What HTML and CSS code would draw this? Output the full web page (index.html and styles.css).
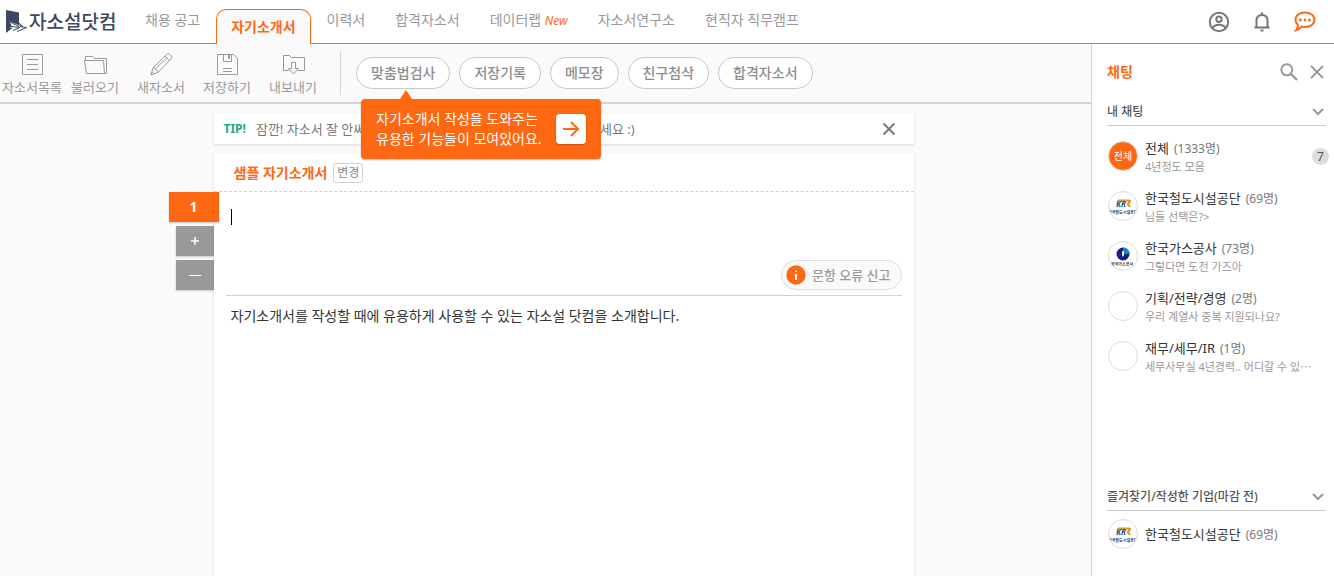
FILE: index.html
```html
<!DOCTYPE html>
<html lang="ko">
<head>
<meta charset="utf-8">
<meta name="viewport" content="width=device-width, initial-scale=1">
<title>자소설닷컴</title>
<link rel="stylesheet" href="styles.css">
</head>
<body>
<header class="header">
  <a class="logo" href="#">
    <svg class="logo-mark" width="22" height="26" viewBox="0 0 22 26" aria-hidden="true">
      <path d="M1 1L14 3.500V19L6 20L1 24Z" fill="#3d4860"/>
      <path d="M4.500 12.500L21.500 18.500L13 23L10.500 21L8 22.500L7.500 19.500L4.500 18L7 17.500Z" fill="#fff"/>
      <path d="M5 13L14 17.500M7.500 12.500L16 17M12 12.500L18 17.500M5 17.500L15 18.500M8 21.500L14 19M12 22.500L21.500 18.500L15 17.500" stroke="#3d4860" stroke-width="1" fill="none"/>
    </svg>
    <span>자소설닷컴</span>
  </a>
  <nav class="nav">
    <a class="nav-link" href="#">채용 공고</a>
    <a class="nav-link nav-link-active" href="#">자기소개서</a>
    <a class="nav-link" href="#">이력서</a>
    <a class="nav-link" href="#">합격자소서</a>
    <a class="nav-link" href="#">데이터랩 <em class="new">New</em></a>
    <a class="nav-link" href="#">자소서연구소</a>
    <a class="nav-link" href="#">현직자 직무캠프</a>
  </nav>
  <div class="header-actions">
    <button class="icon-button" aria-label="내 계정"><svg width="22" height="22" viewBox="0 0 22 22" fill="none" stroke="#777" stroke-width="2"><circle cx="11" cy="11" r="9.2"/><circle cx="11" cy="8.2" r="2.7"/><path d="M4.500 17C6 14.500 8.500 13.800 11 13.800S16 14.500 17.500 17"/></svg></button>
    <button class="icon-button" aria-label="알림"><svg width="22" height="22" viewBox="0 0 22 22" fill="none" stroke="#777" stroke-width="2"><path d="M3.500 16.500H18.500M5.500 16V9.500C5.500 6 7.500 4 11 4S16.500 6 16.500 9.500V16"/><path d="M11 1.500V4M9.500 19.500H12.500" stroke-width="2.200"/></svg></button>
    <button class="icon-button" aria-label="채팅"><svg width="22" height="22" viewBox="0 0 22 22" fill="none" stroke="#ff6813" stroke-width="2"><path d="M11 1.500C16.500 1.500 20.500 4.500 20.500 8.800S16.500 16 11 16C9.800 16 8.700 15.900 7.700 15.600C6.200 17.400 4.600 18.700 2 19.300C3.600 17.500 4.100 15.800 4 14C2.400 12.800 1.500 11 1.500 8.800C1.500 4.500 5.500 1.500 11 1.500Z"/><g fill="#ff6813" stroke="none"><circle cx="6.500" cy="9" r="1.400"/><circle cx="11" cy="9" r="1.400"/><circle cx="15.500" cy="9" r="1.400"/></g></svg></button>
  </div>
</header>
<div class="layout">
  <main class="workspace">
    <div class="toolbar">
      <div class="tools">
        <button class="tool"><svg width="24" height="24" viewBox="0 0 24 24"><path d="M2.500 2.500H22.500V22.500H2.500ZM7 7.500H18M7 12.500H18M7 17.500H18"/></svg>자소서목록</button>
        <button class="tool"><svg width="24" height="24" viewBox="0 0 24 24"><path d="M3.500 21.500L1.500 8.500H20.500L21.500 21.500ZM2.500 8V4.500H9.500L11.500 6.500H23.500V21.500H21.500"/></svg>불러오기</button>
        <button class="tool"><svg width="24" height="24" viewBox="0 0 24 24"><path d="M2 23L4 16L17.500 2.500C18.500 1.500 20 1.500 21 2.500L22 3.500C23 4.500 23 6 22 7L9 20.500ZM4 16C6 15.500 7 17 6.500 18C8 17.500 9.500 18.500 9 20.500M16 4L20.500 8.500M17.500 6L7 16.500M2 23L3 20L5 22"/></svg>새자소서</button>
        <button class="tool"><svg width="24" height="24" viewBox="0 0 24 24"><path d="M2.500 2.500H18.500L22.500 6.500V22.500H2.500ZM8.500 3V9.500H16.500V3M13.500 3V6.500H14.500V3M8 16.500H17M8 19.500H17"/></svg>저장하기</button>
        <button class="tool"><svg width="24" height="24" viewBox="0 0 24 24"><path d="M8 18.500H2.500V3.500H8.500L10.500 5.500H23.500V18.500H17M10.500 10.500H14.500V16.500H17.500L12.500 22L7.500 16.500H10.500Z"/></svg>내보내기</button>
      </div>
      <div class="helpers">
        <button class="pill">맞춤법검사</button>
        <button class="pill">저장기록</button>
        <button class="pill">메모장</button>
        <button class="pill">친구첨삭</button>
        <button class="pill">합격자소서</button>
        <div class="guide">
          <p class="guide-text">자기소개서 작성을 도와주는<br>유용한 기능들이 모여있어요.</p>
          <button class="guide-next" aria-label="다음"><svg width="18" height="18" viewBox="0 0 18 18" fill="none" stroke="#ff6813" stroke-width="2"><path d="M1 9H16M9 2L16 9L9 16"/></svg></button>
        </div>
      </div>
    </div>
    <div class="editor">
      <div class="steps">
        <button class="step step-current">1</button>
        <button class="step" aria-label="문항 추가"><svg width="14" height="14" viewBox="0 0 14 14" stroke="#fff" stroke-width="1.500"><path d="M3 7H11M7 3V11"/></svg></button>
        <button class="step" aria-label="문항 삭제"><svg width="14" height="14" viewBox="0 0 14 14" stroke="#fff"><path d="M1 7.500H13"/></svg></button>
      </div>
      <div class="papers">
        <div class="tip">
          <strong class="tip-label">TIP!</strong>
          <p class="tip-text"><span>잠깐! 자소서 잘 안써</span><span>세요 :)</span></p>
          <button class="tip-close" aria-label="닫기"><svg width="14" height="14" viewBox="0 0 14 14" stroke="#777" stroke-width="1.800"><path d="M1.500 1.500L12.500 12.500M12.500 1.500L1.500 12.500"/></svg></button>
        </div>
        <section class="paper">
          <div class="paper-head">
            <h1 class="paper-title">샘플 자기소개서</h1>
            <button class="change">변경</button>
          </div>
          <div class="question">
            <textarea class="question-input" aria-label="문항"></textarea>
            <span class="caret"></span>
            <button class="report"><svg width="20" height="20" viewBox="0 0 20 20"><circle cx="10" cy="10" r="9.700" fill="#ff6813"/><path d="M10 9V15M10 5.500V7" stroke="#fff" stroke-width="2"/></svg>문항 오류 신고</button>
          </div>
          <textarea class="answer" aria-label="답변">자기소개서를 작성할 때에 유용하게 사용할 수 있는 자소설 닷컴을 소개합니다.</textarea>
        </section>
      </div>
    </div>
  </main>
  <aside class="chat">
    <div class="chat-head">
      <h2 class="chat-title">채팅</h2>
      <button class="chat-action" aria-label="검색"><svg width="18" height="18" viewBox="0 0 18 18" fill="none" stroke="#999" stroke-width="2"><circle cx="6.800" cy="6.800" r="5.500"/><path d="M11 11L17 17" stroke-width="2.400"/></svg></button>
      <button class="chat-action" aria-label="닫기"><svg width="14" height="14" viewBox="0 0 14 14" stroke="#999" stroke-width="1.800"><path d="M1 1L13 13M13 1L1 13"/></svg></button>
    </div>
    <section class="rooms rooms-mine">
      <h3 class="rooms-head"><span>내 채팅</span><svg width="14" height="10" viewBox="0 0 14 10" fill="none" stroke="#999" stroke-width="2"><path d="M2 2L7 7L12 2"/></svg></h3>
      <ul class="room-list">
        <li class="room"><span class="avatar avatar-all">전체</span><div class="room-text"><p class="room-name">전체<small>(1333명)</small></p><p class="room-last">4년정도 모음</p></div><span class="badge">7</span></li>
        <li class="room"><span class="avatar"><svg width="28" height="28" viewBox="0 0 28 28"><path d="M9 7.500H20C22 7.500 22.500 9 21.500 10.500L20 12.500L22.500 15H20L17.500 12.500L19 9.500H7.500Z" fill="#d59b34"/><text class="mark" x="7" y="15">KR</text><text class="caption" x="-1" y="22">한국철도시설공단</text></svg></span><div class="room-text"><p class="room-name">한국철도시설공단<small>(69명)</small></p><p class="room-last">님들 선택은?&gt;</p></div></li>
        <li class="room"><span class="avatar"><svg width="28" height="28" viewBox="0 0 28 28"><circle cx="14" cy="12" r="6.500" fill="#141f80"/><path d="M14 5.500A6.500 6.500 0 0 1 20.500 12L14 12Z" fill="#078bc4"/><ellipse cx="14" cy="11.500" rx="1" ry="3" fill="#fff"/><text class="caption caption-dark" x="2" y="24">한국가스공사</text></svg></span><div class="room-text"><p class="room-name">한국가스공사<small>(73명)</small></p><p class="room-last">그렇다면 도전 가즈아</p></div></li>
        <li class="room"><span class="avatar"></span><div class="room-text"><p class="room-name">기획/전략/경영<small>(2명)</small></p><p class="room-last">우리 계열사 중복 지원되나요?</p></div></li>
        <li class="room"><span class="avatar"></span><div class="room-text"><p class="room-name">재무/세무/IR<small>(1명)</small></p><p class="room-last">세무사무실 4년경력.. 어디갈 수 있<span class="more">⋯</span></p></div></li>
      </ul>
    </section>
    <section class="rooms">
      <h3 class="rooms-head"><span>즐겨찾기/작성한 기업(마감 전)</span><svg width="14" height="10" viewBox="0 0 14 10" fill="none" stroke="#999" stroke-width="2"><path d="M2 2L7 7L12 2"/></svg></h3>
      <ul class="room-list room-list-short">
        <li class="room"><span class="avatar"><svg width="28" height="28" viewBox="0 0 28 28"><path d="M9 7.500H20C22 7.500 22.500 9 21.500 10.500L20 12.500L22.500 15H20L17.500 12.500L19 9.500H7.500Z" fill="#d59b34"/><text class="mark" x="7" y="15">KR</text><text class="caption" x="-1" y="22">한국철도시설공단</text></svg></span><div class="room-text"><p class="room-name">한국철도시설공단<small>(69명)</small></p></div></li>
      </ul>
    </section>
  </aside>
</div>
</body>
</html>
```
FILE: styles.css
```css
* { box-sizing: border-box; }
body {
  margin: 0;
  min-height: 100vh;
  display: flex;
  flex-direction: column;
  background: #fafafa;
  color: #333;
  font: 14px/20px "Noto Sans", "Noto Sans CJK KR", sans-serif;
}
button, textarea { font: inherit; color: inherit; border: 0; background: none; padding: 0; margin: 0; }
button { cursor: pointer; white-space: nowrap; }
h1, h2, h3, p, ul { margin: 0; padding: 0; }
ul { list-style: none; }
a { color: inherit; text-decoration: none; }
svg { display: block; flex: none; }

.header { display: flex; height: 44px; background: #fff; border-bottom: 1px solid #ff6813; }
.logo {
  flex: none;
  display: flex;
  align-items: center;
  gap: 2px;
  width: 131px;
  padding-left: 5px;
  color: #3d4860;
  font-size: 19px;
  font-weight: 500;
  white-space: nowrap;
}
.nav { flex: 1; display: flex; gap: 2px; color: #999; white-space: nowrap; }
.nav-link { padding: 10px 14px; }
.nav-link-active {
  margin-top: 9px;
  margin-bottom: -1px;
  padding: 7px 14px;
  border: 1px solid #ff6813;
  border-bottom: 0;
  border-radius: 10px 10px 0 0;
  background: #fafafa;
  color: #ff6813;
  font-weight: 700;
}
.new { color: #ff6813; font-size: 12px; }
.header-actions { display: flex; align-items: center; padding-right: 8px; }
.icon-button { display: grid; place-items: center; width: 43px; height: 42px; }

.layout { flex: 1; display: flex; }
.workspace { flex: 1; min-width: 0; display: flex; flex-direction: column; }
.toolbar { display: flex; height: 60px; border-bottom: 2px solid #d5d5d5; }
.tools { display: flex; align-self: center; height: 44px; padding-right: 14px; border-right: 1px solid #d5d5d5; }
.tool {
  display: flex;
  flex-direction: column;
  align-items: center;
  gap: 1px;
  width: 66px;
  padding-top: 1px;
  color: #999;
  font-size: 13px;
}
.tool:first-child { width: 64px; margin-right: -2px; }
.tool svg { fill: none; stroke: #999; }
.helpers { position: relative; display: flex; gap: 9px; padding: 13px 0 0 15px; }
.pill {
  height: 32px;
  padding: 0 14px;
  border: 1px solid #c9c9c9;
  border-radius: 16px;
  background: #fff;
  color: #8e8e8e;
  font-weight: 500;
}
.guide {
  position: absolute;
  z-index: 2;
  top: 55px;
  left: 20px;
  display: flex;
  align-items: center;
  justify-content: space-between;
  width: 240px;
  height: 60px;
  padding: 0 15px;
  border-radius: 4px;
  background: #ff6813;
  box-shadow: 0 1px 2px rgba(0, 0, 0, .25);
  color: #fff;
  white-space: nowrap;
}
.guide::before {
  content: "";
  position: absolute;
  top: -9px;
  left: 39px;
  border: 6px solid transparent;
  border-top: 0;
  border-bottom: 9px solid #ff6813;
}
.guide-next {
  display: grid;
  place-items: center;
  width: 30px;
  height: 30px;
  border-radius: 4px;
  background: #fff;
  box-shadow: 0 1px 2px rgba(0, 0, 0, .25);
}

.editor { flex: 1; display: flex; justify-content: center; padding: 10px 2px 0 0; }
.steps { display: flex; flex-direction: column; align-items: flex-end; gap: 4px; width: 38px; padding-top: 78px; }
.step {
  display: grid;
  place-items: center;
  width: 38px;
  height: 30px;
  background: #999;
  box-shadow: 0 1px 2px rgba(0, 0, 0, .2);
  color: #fff;
}
.step-current { position: relative; z-index: 1; width: 50px; margin-right: -5px; background: #ff6813; font-weight: 700; }
.papers { flex: 0 1 700px; display: flex; flex-direction: column; gap: 10px; }
.tip, .paper { background: #fff; box-shadow: 0 1px 2px rgba(0, 0, 0, .12); }
.tip { display: flex; align-items: center; gap: 10px; height: 30px; padding: 0 18px 0 10px; color: #777; font-size: 13px; white-space: nowrap; }
.tip-label { color: #16ad79; font-size: 12px; }
.tip-text { flex: 1; display: grid; grid-template-columns: 344px 1fr; }
.paper { flex: 1; display: flex; flex-direction: column; }
.paper-head { display: flex; align-items: center; gap: 6px; height: 38px; padding-left: 20px; border-bottom: 1px dashed #d0d0d0; }
.paper-title { color: #ff6813; font-size: 14px; font-weight: 700; }
.change { height: 20px; padding: 0 3px; border: 1px solid #d0d0d0; border-radius: 3px; color: #888; font-size: 12px; line-height: 18px; }
.question { position: relative; display: flex; flex-direction: column; margin: 0 12px; padding: 14px 0 5px; border-bottom: 1px solid #d0d0d0; }
.question-input { height: 54px; padding: 0 5px; resize: none; outline: 0; }
.caret { position: absolute; top: 17px; left: 5px; width: 1px; height: 16px; background: #000; }
.report {
  align-self: flex-end;
  display: flex;
  align-items: center;
  gap: 6px;
  height: 30px;
  padding: 0 10px 0 4px;
  border: 1px solid #ddd;
  border-radius: 15px;
  background: #fafafa;
  color: #999;
  font-size: 13px;
  font-weight: 500;
}
.answer { flex: 1; padding: 10px 17px; resize: none; outline: 0; }

.chat { flex: 0 0 243px; min-width: 0; display: flex; flex-direction: column; padding: 0 8px 0 15px; border-left: 1px solid #d5d5d5; background: #fff; }
.chat-head { display: flex; align-items: center; gap: 12px; height: 55px; padding-right: 2px; }
.chat-title { flex: 1; color: #ff6813; font-size: 14px; font-weight: 700; }
.rooms { height: 92px; }
.rooms-mine { flex: 1; height: auto; }
.rooms-head {
  display: flex;
  align-items: center;
  justify-content: space-between;
  height: 27px;
  padding-right: 1px;
  border-bottom: 1px solid #ccc;
  color: #555;
  font-size: 12px;
  font-weight: 500;
}
.room-list { padding-top: 5px; }
.room-list-short { padding-top: 0; }
.room { display: flex; align-items: center; gap: 7px; height: 50px; }
.room-list-short .room { height: 46px; }
.avatar {
  flex: none;
  display: grid;
  place-items: center;
  overflow: hidden;
  width: 30px;
  height: 30px;
  margin-left: 1px;
  border: 1px solid #ddd;
  border-radius: 50%;
  background: #fff;
}
.avatar-all { background: #ff6813; color: #fff; font-size: 10px; }
.mark { fill: #244a84; font: italic 700 8px "Noto Sans", sans-serif; }
.caption { fill: #244a84; font: 700 4px "Noto Sans CJK KR", sans-serif; }
.caption-dark { fill: #444; }
.room-text { flex: 1; min-width: 0; padding-top: 2px; line-height: 18px; white-space: nowrap; }
.room-list-short .room-text { padding-top: 0; }
.room-name { font-size: 13px; }
.room-name small { margin-left: 5px; color: #777; font-size: 12px; }
.room-last { overflow: hidden; color: #999; font-size: 11px; text-overflow: ellipsis; }
.badge { flex: none; width: 17px; height: 17px; margin-right: -3px; border-radius: 50%; background: #ddd; color: #555; font-size: 12px; line-height: 17px; text-align: center; }
```
